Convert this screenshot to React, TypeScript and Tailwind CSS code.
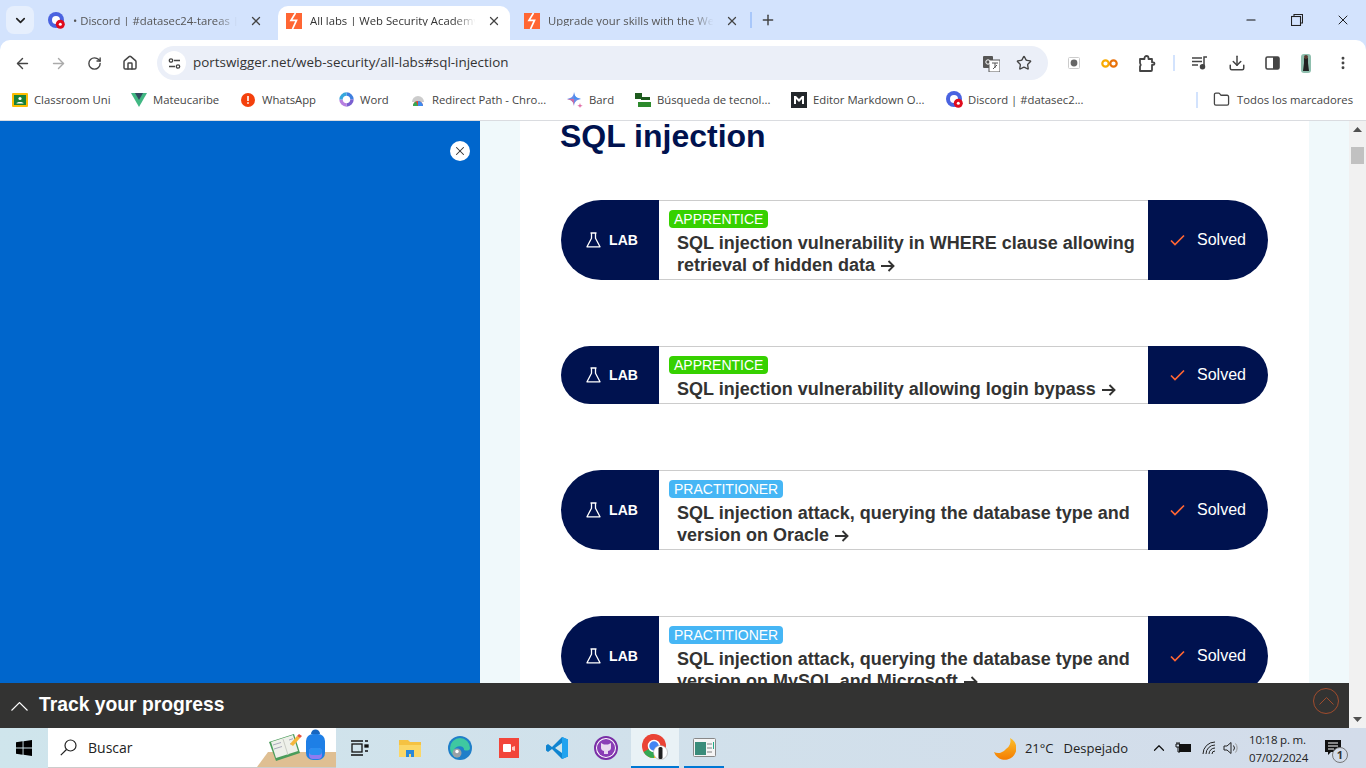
import React from "react";
import { ArrowLeft, ArrowRight, RotateCw, Home, Star, Download, MoreVertical, X, Plus, ChevronDown, ChevronUp, Folder, Minus } from "lucide-react";

const ui = { fontFamily: '"Open Sans","Noto Sans",sans-serif' };

function PsIcon() {
  return (
    <svg width="16" height="16" viewBox="0 0 16 16" className="shrink-0">
      <rect width="16" height="16" fill="#ff6633" />
      <path d="M9.500 0 5 7.300h5.500L6.500 16" fill="none" stroke="#fff" strokeWidth="1.700" />
    </svg>
  );
}

function DiscordIcon() {
  return (
    <svg width="17" height="17" viewBox="0 0 17 17" className="shrink-0">
      <circle cx="8" cy="8" r="8" fill="#4a63e0" />
      <circle cx="8" cy="8" r="4" fill="#fff" />
      <circle cx="12.300" cy="12.300" r="4.500" fill="#e00b1c" />
      <circle cx="12.300" cy="12.300" r="1.500" fill="#fff" />
    </svg>
  );
}

function Tab({ icon, title, active, last }: { icon: React.ReactNode; title: string; active?: boolean; last?: boolean }) {
  return (
    <div className={`w-[232px] h-[34px] flex items-center pl-[8px] pr-[9px] pb-[5px] gap-2 rounded-t-[10px] ${last ? "" : "mr-[6px]"} ${active ? "bg-white text-[#333]" : "text-[#555]"}`}>
      {icon}
      <span className="flex-1 overflow-hidden whitespace-nowrap text-[11.3px] leading-none [mask-image:linear-gradient(to_right,black_85%,transparent_98%)]">{title}</span>
      <X size={14} strokeWidth={2.2} className="shrink-0 text-[#444]" />
    </div>
  );
}

function Bookmark({ icon, label, width }: { icon: React.ReactNode; label: string; width: string }) {
  return (
    <div className={`${width} flex items-center gap-[6px] shrink-0`}>
      <span className="w-4 h-4 flex items-center justify-center shrink-0">{icon}</span>
      <span className="text-[11.3px] text-[#444] whitespace-nowrap leading-none">{label}</span>
    </div>
  );
}

function Flask() {
  return (
    <svg width="15" height="16" viewBox="0 0 15 16" fill="none" stroke="#fff" strokeWidth="1.300" strokeLinejoin="round" className="shrink-0">
      <path d="M4.500 1h6M5.500 1v5.200L1 14.800h13L9.500 6.200V1" />
    </svg>
  );
}

function TitleArrow() {
  return (
    <svg width="14" height="12" viewBox="0 0 14 12" fill="none" stroke="#333332" strokeWidth="1.900" className="inline-block ml-[1px] align-[-0.5px]">
      <path d="M0 6h12.500M7.500 1l5 5-5 5" />
    </svg>
  );
}

function Card({ level, title, h }: { level: "APPRENTICE" | "PRACTITIONER"; title: React.ReactNode; h: string }) {
  return (
    <div className={`${h} flex shrink-0 mb-[66px] mr-[1px]`}>
      <div className="w-[98px] ml-[1px] bg-[#00124f] rounded-l-[40px] flex items-center justify-center gap-[8px] pl-[4px] text-white font-bold text-[14px]">
        <Flask />
        <span>LAB</span>
      </div>
      <div className="flex-1 border-y border-[#ccc] pl-[10px] pt-[9px]">
        <span className={`block w-fit h-[18px] leading-[18px] rounded-[4px] px-[5px] text-[14px] text-white ${level === "APPRENTICE" ? "bg-[#36d100]" : "bg-[#46b6f5]"}`}>{level}</span>
        <p className="ml-[8px] mt-[4px] text-[18px] leading-[22px] font-bold text-[#333332]">{title}</p>
      </div>
      <div className="w-[120px] bg-[#00124f] rounded-r-[40px] flex items-center pl-[22px] gap-[12px] text-white text-[16px]">
        <svg width="15" height="12" viewBox="0 0 15 12" fill="none" stroke="#ff6633" strokeWidth="1.700"><path d="M1 6.500l4 4L14 1.500" /></svg>
        <span>Solved</span>
      </div>
    </div>
  );
}

export default function App() {
  return (
    <div className="w-[1366px] h-[768px] overflow-hidden flex flex-col bg-[#d3e3fd]" style={ui}>
      {/* tab strip */}
      <div className="h-10 shrink-0 flex items-end relative">
        <div className="ml-[6px] mb-[6px] w-7 h-7 rounded-[8px] bg-[#e6effd] flex items-center justify-center">
          <ChevronDown size={15} strokeWidth={2.600} className="text-[#222]" />
        </div>
        <div className="flex ml-[6px] items-end">
          <Tab icon={<DiscordIcon />} title="• Discord | #datasec24-tareas | U" />
          <Tab active icon={<PsIcon />} title="All labs | Web Security Academy" />
          <Tab last icon={<PsIcon />} title="Upgrade your skills with the Web" />
        </div>
        <div className="w-[2px] h-4 mb-[12px] bg-[#a8c7fa] ml-[2px]"></div>
        <Plus size={16} strokeWidth={2.200} className="ml-[8px] mb-[12px] text-[#444]" />
        <div className="ml-auto flex items-center mb-[12px] text-[#111]">
          <Minus size={14} strokeWidth={1.800} className="mr-[33px]" />
          <svg width="12" height="12" viewBox="0 0 12 12" fill="none" stroke="#222" strokeWidth="1.100" className="mr-[32px]"><rect x="0.500" y="2.500" width="9" height="9" /><path d="M3 2.500V.500h8.500V9H9.500" /></svg>
          <X size={16} strokeWidth={1.400} className="mr-[15px]" />
        </div>
      </div>

      {/* toolbar */}
      <div className="h-10 pt-[6px] shrink-0 bg-white rounded-t-[10px] flex items-center text-[#444]">
        <ArrowLeft size={17} strokeWidth={2} className="ml-[14px]" />
        <ArrowRight size={17} strokeWidth={2} className="ml-[19px] text-[#aaa]" />
        <RotateCw size={15} strokeWidth={2.200} className="ml-[20px]" />
        <Home size={16} strokeWidth={2.200} className="ml-[20px]" />
        <div className="ml-[19px] w-[891px] h-[34px] bg-[#ebeff8] rounded-full flex items-center">
          <span className="ml-[5px] w-6 h-6 rounded-full bg-white flex items-center justify-center">
            <svg width="13" height="13" viewBox="0 0 13 13" fill="none" stroke="#444" strokeWidth="1.300"><path d="M6 3.500h6M1 9.500h6" /><circle cx="3" cy="3.500" r="1.700" /><circle cx="10" cy="9.500" r="1.700" /></svg>
          </span>
          <span className="ml-[7px] text-[13.400px] text-[#333] leading-none">portswigger.net/web-security/all-labs#sql-injection</span>
          <svg width="17" height="17" viewBox="0 0 17 17" className="ml-auto"><rect x="0" y="1" width="10" height="12" rx="1" fill="#555" /><rect x="6" y="5" width="11" height="12" fill="#fff" stroke="#555" /><path d="M9 8h6M12 8v5M10 14l4-4" stroke="#555" strokeWidth="1" fill="none" /><circle cx="5" cy="7" r="2.200" fill="none" stroke="#fff" /></svg>
          <Star size={16} strokeWidth={2} className="ml-[16px] mr-[16px] text-[#444]" />
        </div>
        <svg width="12" height="12" viewBox="0 0 12 12" className="ml-[20px]"><rect x="0.500" y="0.500" width="11" height="11" rx="1" fill="#fff" stroke="#ccc" /><circle cx="6" cy="6" r="3.400" fill="#666" /></svg>
        <svg width="17" height="9" viewBox="0 0 17 9" fill="none" strokeWidth="2.200" className="ml-[21px]"><circle cx="4.500" cy="4.500" r="3.200" stroke="#f9ab00" /><circle cx="12.500" cy="4.500" r="3.200" stroke="#e8710a" /></svg>
        <svg width="18" height="17" viewBox="0 0 18 17" fill="none" stroke="#444" strokeWidth="1.800" strokeLinejoin="round" className="ml-[20px]"><path d="M2 4h4.500V3a2 2 0 0 1 4 0v1H14v3.300h1.200a1.300 1.300 0 0 1 0 2.600H14V15a1 1 0 0 1-1 1H2v-4.500a2.800 2.800 0 0 0 0-3.500z" /></svg>
        <div className="w-[2px] h-4 bg-[#d3e3fd] ml-[17px]"></div>
        <svg width="17" height="14" viewBox="0 0 17 14" fill="none" stroke="#444" strokeWidth="1.500" className="ml-[17px]"><path d="M0 2h10M0 5.500h10M0 9h6" /><path d="M15 1h-3v9" /><circle cx="10.500" cy="10.800" r="2" fill="#444" /></svg>
        <Download size={18} strokeWidth={2} className="ml-[19px]" />
        <svg width="15" height="14" viewBox="0 0 15 14" className="ml-[19px]"><rect x="1" y="1" width="13" height="12" rx="1.500" fill="#fff" stroke="#444" strokeWidth="1.600" /><rect x="8" y="1" width="6" height="12" fill="#444" /></svg>
        <svg width="10" height="19" viewBox="0 0 10 19" className="ml-[21px]"><rect width="10" height="19" rx="3" fill="#8fbfae" /><path d="M3 4h4v5l1 8H2l1-8z" fill="#222" /><circle cx="5" cy="3" r="2" fill="#5a3a30" /></svg>
        <MoreVertical size={16} strokeWidth={2.400} className="ml-[24px]" />
      </div>

      {/* bookmarks */}
      <div className="h-[41px] shrink-0 bg-white border-b border-[#dadce0] flex items-center pl-[12px] pb-[1px]">
        <Bookmark width="w-[119px]" label="Classroom Uni" icon={<svg width="16" height="14" viewBox="0 0 16 14"><rect width="16" height="14" rx="1" fill="#fbbc04" /><rect x="2" y="2" width="12" height="10" fill="#188038" /><circle cx="8" cy="5.500" r="1.600" fill="#fff" /><path d="M4.500 10.500c0-2 7-2 7 0z" fill="#fff" /></svg>} />
        <Bookmark width="w-[109px]" label="Mateucaribe" icon={<svg width="16" height="14" viewBox="0 0 16 14"><path d="M0 0h16L8 14z" fill="#41b883" /><path d="M4 0h8L8 7z" fill="#34495e" /></svg>} />
        <Bookmark width="w-[98px]" label="WhatsApp" icon={<svg width="14" height="14" viewBox="0 0 14 14"><circle cx="7" cy="7" r="7" fill="#f4400c" /><rect x="6.200" y="3" width="1.600" height="5" fill="#fff" /><rect x="6.200" y="9.200" width="1.600" height="1.600" fill="#fff" /></svg>} />
        <Bookmark width="w-[72px]" label="Word" icon={<svg width="15" height="15" viewBox="0 0 15 15" fill="none" strokeWidth="3.400"><path d="M7.500 2A5.500 5.500 0 0 1 13 7.500" stroke="#3f7fe0" /><path d="M13 7.500A5.500 5.500 0 0 1 7.500 13" stroke="#7a5fd0" /><path d="M7.500 13A5.500 5.500 0 0 1 2 7.500" stroke="#b77fe0" /><path d="M2 7.500A5.500 5.500 0 0 1 7.500 2" stroke="#35a7dd" /></svg>} />
        <Bookmark width="w-[157px]" label="Redirect Path - Chro..." icon={<svg width="16" height="16" viewBox="0 0 16 16"><path d="M2 10a6 6 0 0 1 12 0z" fill="#ccc" /><path d="M3 14a5 5 0 0 1 10 0z" fill="#e34133" /><path d="M8 9a5 5 0 0 1 5 5H8z" fill="#3d8bf0" /><path d="M3 14a5 5 0 0 1 3-4.500L8 14z" fill="#34a853" /></svg>} />
        <Bookmark width="w-[68px]" label="Bard" icon={<svg width="16" height="16" viewBox="0 0 16 16"><path d="M7 0C7.500 4 9 6 14 7 9 8 7.500 10 7 14 6.500 10 5 8 0 7 5 6 6.500 4 7 0z" fill="#6a8ce8" /><path d="M7 0C7.500 4 9 6 14 7H7z" fill="#4a90f0" /><path d="M7 14C6.500 10 5 8 0 7h7z" fill="#d06ea0" /><path d="M13 11l.7 2 2 .7-2 .7-.7 1.600-.7-1.600-2-.7 2-.7z" fill="#e06fa8" /></svg>} />
        <Bookmark width="w-[156px]" label="Búsqueda de tecnol..." icon={<svg width="16" height="16" viewBox="0 0 16 16"><rect x="0" y="1" width="7" height="6" fill="#1e5b1e" /><rect x="6" y="5" width="9" height="3" fill="#1e5b1e" /><rect x="3" y="10" width="13" height="5" fill="#2d8a2d" /></svg>} />
        <Bookmark width="w-[155px]" label="Editor Markdown O..." icon={<svg width="16" height="16" viewBox="0 0 16 16"><rect width="16" height="16" fill="#23272b" /><path d="M3 12V4h2l3 3 3-3h2v8h-2V7l-3 3-3-3v5z" fill="#fff" /></svg>} />
        <Bookmark width="w-[250px]" label="Discord | #datasec2..." icon={<DiscordIcon />} />
        <div className="w-[2px] h-4 bg-[#d3e3fd]"></div>
        <Folder size={17} strokeWidth={1.800} className="ml-[15px] text-[#444]" />
        <span className="ml-[7px] text-[11.300px] text-[#444] whitespace-nowrap leading-none">Todos los marcadores</span>
      </div>

      {/* page */}
      <div className="flex-1 min-h-0 flex relative overflow-hidden">
        <div className="w-[480px] shrink-0 bg-[#0066cc] pt-[20px] pr-[10px] flex justify-end items-start">
          <span className="w-5 h-5 rounded-full bg-white flex items-center justify-center">
            <X size={14} strokeWidth={1.800} className="text-[#333]" />
          </span>
        </div>
        <div className="flex-1 bg-[#f0f9fb] px-[40px]" style={{ fontFamily: '"Liberation Sans",Arial,sans-serif' }}>
          <div className="h-full bg-white px-[40px] overflow-hidden">
            <h1 className="text-[32px] leading-[32px] font-bold text-[#00124f] mt-[-1px] mb-[48px]">SQL injection</h1>
            <Card h="h-[80px]" level="APPRENTICE" title={<>SQL injection vulnerability in WHERE clause allowing retrieval of hidden data <TitleArrow /></>} />
            <Card h="h-[58px]" level="APPRENTICE" title={<>SQL injection vulnerability allowing login bypass <TitleArrow /></>} />
            <Card h="h-[80px]" level="PRACTITIONER" title={<>SQL injection attack, querying the database type and version on Oracle <TitleArrow /></>} />
            <Card h="h-[80px]" level="PRACTITIONER" title={<>SQL injection attack, querying the database type and version on MySQL and Microsoft <TitleArrow /></>} />
          </div>
        </div>
        <div className="w-[17px] shrink-0 bg-[#f1f1f1] flex flex-col items-center">
          <svg width="9" height="5" viewBox="0 0 9 5" className="mt-[6px]"><path d="M4.500 0 9 5H0z" fill="#505050" /></svg>
          <div className="w-[13px] h-[17px] bg-[#c1c1c1] mt-[15px]"></div>
          <svg width="9" height="5" viewBox="0 0 9 5" className="mt-auto mb-[6px]"><path d="M4.500 5 9 0H0z" fill="#505050" /></svg>
        </div>
        {/* overlay */}
        <div className="absolute left-0 bottom-0 w-[1349px] h-[45px] bg-[#333332] flex items-center pl-[11px]" style={{ fontFamily: '"Liberation Sans",Arial,sans-serif' }}>
          <svg width="17" height="9" viewBox="0 0 17 9" fill="none" stroke="#fff" strokeWidth="1.100" className="mt-[1px]"><path d="M.5 8.500l8-8 8 8" /></svg>
          <span className="ml-[11px] mb-[1px] text-[19.300px] font-bold text-white leading-none">Track your progress</span>
          <span className="ml-auto mr-[10px] mb-[10px] w-[26px] h-[26px] rounded-full border border-[#a04c2d] flex items-center justify-center">
            <svg width="15" height="8" viewBox="0 0 15 8" fill="none" stroke="#a04c2d" strokeWidth="1"><path d="M.5 7.500l7-7 7 7" /></svg>
          </span>
        </div>
      </div>

      {/* taskbar */}
      <div className="h-10 shrink-0 flex items-center bg-gradient-to-r from-[#cfe5ec] to-[#d3dcea] text-[#111]">
        <svg width="16" height="16" viewBox="0 0 16 16" className="ml-[16px]"><path d="M0 2.300 6.600 1.300v6.200H0zM7.500 1.200 16 0v7.500H7.500zM0 8.500h6.600v6.200L0 13.700zM7.500 8.500H16V16l-8.500-1.200z" fill="#000" /></svg>
        <div className="ml-[16px] w-[288px] h-10 bg-white border-b border-[#ccc] flex items-center overflow-hidden">
          <svg width="17" height="17" viewBox="0 0 17 17" fill="none" stroke="#222" strokeWidth="1.200" className="ml-[12px]"><circle cx="10.500" cy="6.500" r="5.500" /><path d="M6.500 10.500.8 16.200" /></svg>
          <span className="ml-[11px] text-[14px] leading-none text-[#222]">Buscar</span>
          <svg width="80" height="40" viewBox="0 0 80 40" className="ml-auto self-end shrink-0">
            <path d="M1 40 12 25H80V40z" fill="#dfbf93" />
            <path d="M13 15 38 7 44 26 20 34z" fill="#4a9c5a" />
            <path d="M15 15 37 8 42 24 20 31z" fill="#eef0ea" />
            <path d="M27 12 32 28" stroke="#c9ccc4" />
            <path d="M17 18l8-2.500M18 22l8-2.500M33 13l4-1.300M34 17l4-1.300" stroke="#aab" strokeWidth="1" />
            <path d="M34 17 41 9l3 2-7 8z" fill="#f6b73c" />
            <path d="M41 9l2-2 3 2-2 2z" fill="#e5533d" />
            <rect x="50" y="7" width="19" height="26" rx="7" fill="#1e7fe6" />
            <path d="M55 7a4.500 4.500 0 0 1 9 0z" fill="#1766c0" />
            <rect x="53" y="21" width="13" height="11" rx="4" fill="#8f7cf0" />
            <rect x="53" y="21" width="13" height="7" rx="3.500" fill="#2a8ff0" />
          </svg>
        </div>
        <svg width="18" height="16" viewBox="0 0 18 16" fill="none" stroke="#111" strokeWidth="1.300" className="ml-[15px]"><rect x="1" y="4" width="10" height="8" /><path d="M0 1h12M0 15h12" /><rect x="14" y="5" width="3" height="2" fill="#111" /><path d="M14 1h3M14 11h3" /></svg>
        <svg width="22" height="18" viewBox="0 0 22 18" className="ml-[30px]"><path d="M0 1h9l2 2h11v15H0z" fill="#f5c242" /><rect x="0" y="6" width="22" height="12" fill="#fbd766" /><path d="M7 18v-7h8v7h-3v-3h-2v3z" fill="#2b88d8" /></svg>
        <svg width="24" height="24" viewBox="0 0 24 24" className="ml-[27px]"><circle cx="12" cy="12" r="12" fill="#1f7fc9" /><path d="M2 12a10 10 0 0 1 20 0c0 3-4 3-6 2 1-4-8-6-10 0-1 3 2 8 6 8C6 22 2 17 2 12z" fill="#3fc8a0" /><circle cx="9" cy="17" r="4.500" fill="#9aa0a6" /><circle cx="9" cy="15.500" r="1.700" fill="#fff" /></svg>
        <svg width="20" height="20" viewBox="0 0 20 20" className="ml-[27px]"><rect width="20" height="20" fill="#f2453a" /><rect x="4" y="6" width="8" height="8" rx="1" fill="#fff" /><path d="M13 9l3-1v5l-3-1z" fill="#ffc9c3" /></svg>
        <svg width="24" height="24" viewBox="0 0 24 24" className="ml-[26px]"><path d="M17 1 7 11 3 8 1 9.500v5L3 16l4-3 10 10 6-2.500V3.500z" fill="#0f84d0" /><path d="M17 7 10 12l7 5z" fill="#cfe5ec" /><path d="M17 1l6 2.500v17L17 23z" fill="#21a3ef" /></svg>
        <svg width="24" height="24" viewBox="0 0 24 24" className="ml-[25px]"><circle cx="12" cy="12" r="11" fill="#fff" stroke="#7a2fa6" strokeWidth="2" /><circle cx="12" cy="12" r="9" fill="#8a3db6" /><path d="M7 7l3 1.500h4L17 7v5c0 2-2 3-3 3v3h-4v-3c-1 0-3-1-3-3z" fill="#e8d8f0" /></svg>
        <div className="ml-[13px] w-[48px] h-10 bg-[#e9f2f6] border-b-[2px] border-[#0078d4] flex items-center justify-center">
          <svg width="26" height="26" viewBox="0 0 26 26">
            <circle cx="12" cy="12" r="12" fill="#ea4335" />
            <path d="M12 12 22.400 18A12 12 0 0 1 6 22.400z" fill="#fbbc04" />
            <path d="M12 12 1.600 18A12 12 0 0 0 12 24z" fill="#34a853" />
            <path d="M12 0A12 12 0 0 0 1.600 6L6 14z" fill="#ea4335" />
            <circle cx="12" cy="12" r="5.500" fill="#4285f4" stroke="#fff" strokeWidth="1.500" />
            <circle cx="18.500" cy="18.500" r="7" fill="#fff" stroke="#999" strokeWidth=".5" />
            <rect x="16.500" y="13" width="4" height="12" rx="1.500" fill="#222" />
          </svg>
        </div>
        <div className="ml-[5px] w-[40px] h-10 border-b-[2px] border-[#0078d4] flex items-center justify-center">
          <svg width="23" height="19" viewBox="0 0 23 19"><rect x=".5" y=".5" width="22" height="18" rx="1" fill="#f5f5f5" stroke="#888" /><rect x="2" y="4" width="11" height="13" fill="#3a8c7a" /><rect x="14" y="5" width="5" height="2" fill="#bbb" /><rect x="14" y="9" width="5" height="2" fill="#bbb" /><rect x="14" y="13" width="5" height="2" fill="#bbb" /><rect x="20" y="4" width="1" height="7" fill="#2a8" /></svg>
        </div>
        <div className="ml-auto flex items-center text-[13px] h-full">
          <svg width="23" height="23" viewBox="0 0 23 23"><defs><linearGradient id="m" x1="0" y1="0" x2="0" y2="1"><stop offset="0" stopColor="#fbc02d" /><stop offset="1" stopColor="#f57c00" /></linearGradient></defs><path d="M17 1A11.500 11.500 0 1 1 1 15 9.500 9.500 0 0 0 13 12 9.500 9.500 0 0 0 17 1z" fill="url(#m)" /></svg>
          <span className="ml-[9px] text-[#222] leading-none">21°C</span>
          <span className="ml-[10px] mr-[22px] text-[#222] leading-none">Despejado</span>
          <ChevronUp size={18} strokeWidth={1.600} className="mr-[7px]" />
          <svg width="16" height="12" viewBox="0 0 16 12" className="mr-[11px]"><rect x="4" y="2" width="12" height="8" fill="#111" /><path d="M1 2h4v3H1zM2 0v2M4 0v2M3 5v5h2" stroke="#111" fill="none" /></svg>
          <svg width="14" height="14" viewBox="0 0 14 14" fill="none" stroke="#222" strokeWidth="1" className="mr-[7px]"><path d="M1 13A12 12 0 0 1 13 1M4 13a9 9 0 0 1 9-9M7 13a6 6 0 0 1 6-6M10 13a3 3 0 0 1 3-3" /></svg>
          <svg width="16" height="14" viewBox="0 0 16 14" fill="none" stroke="#222" strokeWidth="1" className="mr-[10px]"><path d="M1 5v4h3l4 3.500V1.500L4 5zM10.500 4.500a4 4 0 0 1 0 5" /><path d="M12.500 2.500a7 7 0 0 1 0 9" stroke="#999" /></svg>
          <div className="w-[60px] pt-[2px] text-[11.500px] tracking-[-0.2px] leading-[18px] text-[#222] mr-[16px] whitespace-nowrap">
            <div>10:18 p. m.</div>
            <div>07/02/2024</div>
          </div>
          <div className="relative w-[24px] h-full mr-[17px] flex items-center">
            <svg width="17" height="16" viewBox="0 0 17 16"><path d="M0 0h16v12H6l-3 3v-3H0z" fill="#111" /><path d="M3 3h10M3 6h10M3 9h6" stroke="#fff" /></svg>
            <span className="absolute left-[7px] top-[19px] w-[16px] h-[16px] rounded-full bg-[#d3dcea] border border-[#777] text-[11px] font-bold leading-[14px] text-center text-[#333]">1</span>
          </div>
        </div>
      </div>
    </div>
  );
}
